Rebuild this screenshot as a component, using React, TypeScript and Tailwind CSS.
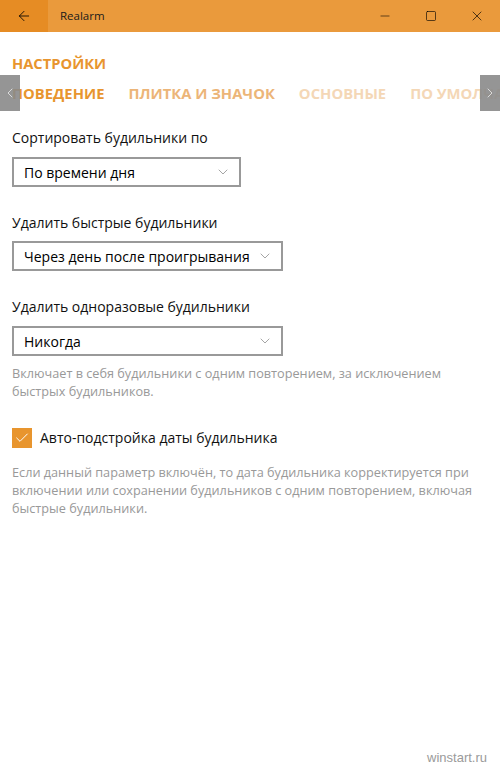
import { ChevronDown, ChevronLeft, ChevronRight, ArrowLeft, Minus, Square, X, Check } from 'lucide-react'

const FONT = { fontFamily: '"Open Sans", "Noto Sans", sans-serif' }

function Combo({ value, w }: { value: string; w: string }) {
  return (
    <div className={`${w} h-[30px] border-2 border-[#999] flex items-center pl-[10px] pr-[8px] text-[14px] text-black`}>
      <span className="flex-1 whitespace-nowrap">{value}</span>
      <ChevronDown size={16} strokeWidth={1} className="text-[#777]" />
    </div>
  )
}

export default function App() {
  return (
    <div className="w-[500px] h-[774px] bg-white relative overflow-hidden" style={FONT}>
      {/* title bar */}
      <div className="h-8 flex items-center bg-[#ea9a3c]">
        <div className="w-12 h-8 bg-[#e68c24] flex items-center justify-center">
          <ArrowLeft size={16} strokeWidth={1.25} className="text-black" />
        </div>
        <span className="ml-3 text-[11.5px] text-[#1a1a1a]">Realarm</span>
        <div className="ml-auto flex h-8">
          <div className="w-[46px] flex items-center justify-center"><Minus size={14} strokeWidth={1} /></div>
          <div className="w-[46px] flex items-center justify-center"><Square size={12} strokeWidth={1.25} /></div>
          <div className="w-[46px] flex items-center justify-center"><X size={16} strokeWidth={1} /></div>
        </div>
      </div>

      {/* header */}
      <div className="pl-3 pt-[21px] text-[14.7px] font-bold text-[#e8952e] leading-5">НАСТРОЙКИ</div>

      {/* pivot */}
      <div className="relative mt-[2px] h-9 overflow-hidden">
        <div className="flex items-center h-9 pl-3 gap-6 whitespace-nowrap text-[14.8px] font-bold">
          <span className="text-[#e8952e]">ПОВЕДЕНИЕ</span>
          <span className="text-[#ecb578]">ПЛИТКА И ЗНАЧОК</span>
          <span className="text-[#f4d7b6]">ОСНОВНЫЕ</span>
          <span className="text-[#f4d7b6]">ПО УМОЛЧАНИЮ</span>
        </div>
        <div className="absolute left-0 top-0 w-5 h-9 bg-[#8a8a8a]/90 flex items-center justify-center">
          <ChevronLeft size={16} strokeWidth={1} className="text-white" />
        </div>
        <div className="absolute right-0 top-0 w-5 h-9 bg-[#8a8a8a]/90 flex items-center justify-center">
          <ChevronRight size={16} strokeWidth={1} className="text-white" />
        </div>
      </div>

      {/* content */}
      <div className="px-3 text-[14px] text-[#111]">
        <div className="mt-[17px] leading-5">Сортировать будильники по</div>
        <div className="mt-[9px]"><Combo value="По времени дня" w="w-[229px]" /></div>

        <div className="mt-[26px] leading-5">Удалить быстрые будильники</div>
        <div className="mt-[8px]"><Combo value="Через день после проигрывания" w="w-[271px]" /></div>

        <div className="mt-[26px] leading-5">Удалить одноразовые будильники</div>
        <div className="mt-[9px]"><Combo value="Никогда" w="w-[271px]" /></div>

        <div className="mt-[8px] text-[12.7px] leading-[18px] text-[#999]">
          Включает в себя будильники с одним повторением, за исключением быстрых будильников.
        </div>

        <div className="mt-[28px] flex items-center gap-2">
          <div className="w-5 h-5 bg-[#e8952e] flex items-center justify-center">
            <Check size={16} strokeWidth={1.5} className="text-white" />
          </div>
          <span className="leading-5">Авто-подстройка даты будильника</span>
        </div>

        <div className="mt-[15px] text-[12.7px] leading-[18px] text-[#999] pr-2">
          Если данный параметр включён, то дата будильника корректируется при включении или сохранении будильников с одним повторением, включая быстрые будильники.
        </div>
      </div>

      <div className="absolute right-[13px] bottom-[7px] text-[13px] text-[#9a9a9a]" style={{ fontFamily: '"Liberation Sans", sans-serif' }}>winstart.ru</div>
    </div>
  )
}
